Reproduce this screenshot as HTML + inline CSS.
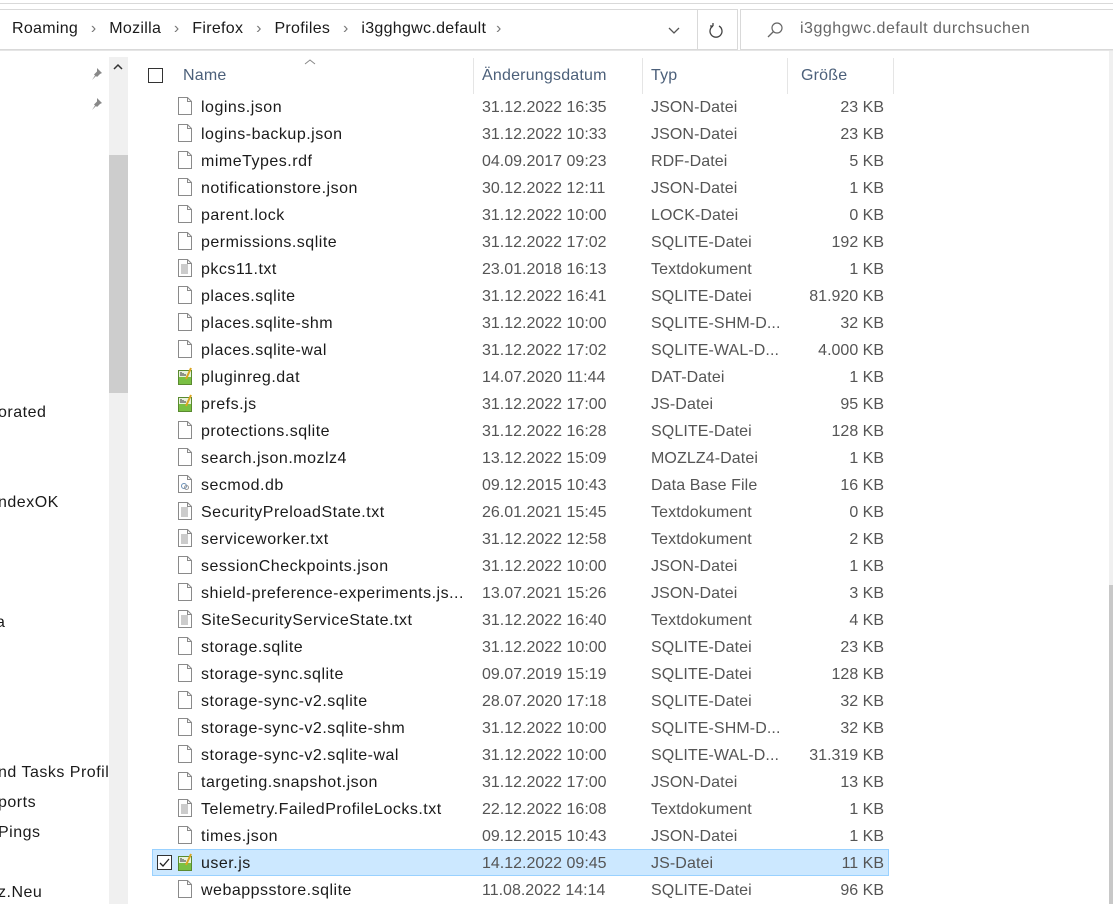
<!DOCTYPE html>
<html><head><meta charset="utf-8"><style>
*{margin:0;padding:0;box-sizing:border-box}
body{width:1113px;height:904px;overflow:hidden;background:#fff;font-family:"Segoe UI","Liberation Sans",sans-serif;font-size:16px;letter-spacing:0.5px;color:#1a1a1a;position:relative}
.a{position:absolute;white-space:nowrap}
.row{position:absolute;left:152px;width:737px;height:27px}
.row span{position:absolute;top:6px}
.n{left:49px}.d{left:330px;color:#555;letter-spacing:0}.t{left:499px;color:#555;letter-spacing:0.1px}.s{right:5px;color:#555;letter-spacing:0}
.ic{position:absolute;left:26px;top:4px;width:14px;height:18px}
.hd{position:absolute;top:67px;color:#4c607a;letter-spacing:0.2px}
.sep{position:absolute;top:58px;width:1px;height:36px;background:#e5e5e5}
</style></head><body>
<div class="a" style="left:0;top:3px;width:1113px;height:1px;background:#d9d9d9"></div>
<div class="a" style="left:0;top:9px;width:738px;height:41px;border:1px solid #d9d9d9;border-left:none"></div>
<div class="a" style="left:697px;top:10px;width:1px;height:39px;background:#d9d9d9"></div>
<div class="a" style="left:12px;top:20px;font-size:16px;letter-spacing:0.3px">Roaming <span style="color:#777;padding:0 8px">›</span> Mozilla <span style="color:#777;padding:0 8px">›</span> Firefox <span style="color:#777;padding:0 8px">›</span> Profiles <span style="color:#777;padding:0 8px">›</span> i3gghgwc.default <span style="color:#777;padding:0 5px">›</span></div>
<svg class="a" style="left:667px;top:25px" width="14" height="10"><path d="M2 3l5 5 5-5" fill="none" stroke="#555" stroke-width="1.3"/></svg>
<svg class="a" style="left:708px;top:22px" width="16" height="18"><path d="M5 4A6 6 0 1 0 11 4M5 4V1M5 4H2" fill="none" stroke="#444" stroke-width="1.3"/></svg>
<div class="a" style="left:740px;top:9px;width:380px;height:41px;border:1px solid #d9d9d9"></div>
<svg class="a" style="left:766px;top:21px" width="18" height="18"><circle cx="11" cy="7" r="5" fill="none" stroke="#666" stroke-width="1.2"/><path d="M7.5 10.5L2 16" stroke="#666" stroke-width="1.3"/></svg>
<div class="a" style="left:800px;top:20px;font-size:16px;color:#666">i3gghgwc.default durchsuchen</div>
<div class="a" style="left:0;top:50px;width:1113px;height:1px;background:#e5e5e5"></div>
<svg class="a" style="left:90px;top:66px" width="14" height="14"><path d="M7 2l5 5-2 1-3 3-1 -1-4 4 3-4.5-1-1 3-3z" fill="#888"/></svg>
<svg class="a" style="left:90px;top:96px" width="14" height="14"><path d="M7 2l5 5-2 1-3 3-1 -1-4 4 3-4.5-1-1 3-3z" fill="#888"/></svg>
<div class="a" style="left:109px;top:57px;width:19px;height:847px;background:#f0f0f0"></div>
<div class="a" style="left:109px;top:155px;width:19px;height:238px;background:#cdcdcd"></div>
<svg class="a" style="left:112px;top:62px" width="12" height="10"><path d="M2 7l4-4 4 4" fill="none" stroke="#333" stroke-width="1.5"/></svg>
<div class="a" style="left:1109px;top:51px;width:4px;height:853px;background:#f0f0f0"></div>
<div class="a" style="left:1109px;top:585px;width:4px;height:319px;background:#c8c8c8"></div>
<div class="a" style="left:-2px;top:404px">orated</div>
<div class="a" style="left:-2px;top:494px">ndexOK</div>
<div class="a" style="left:-4px;top:614px">a</div>
<div class="a" style="left:-2px;top:764px">nd Tasks Profil</div>
<div class="a" style="left:-2px;top:794px">ports</div>
<div class="a" style="left:-2px;top:824px">Pings</div>
<div class="a" style="left:-2px;top:884px">z.Neu</div>
<div class="a" style="left:148px;top:68px;width:15px;height:15px;border:1px solid #333"></div>
<svg class="a" style="left:304px;top:58px" width="12" height="8"><path d="M1 6l5-4 5 4" fill="none" stroke="#888" stroke-width="1"/></svg>
<div class="hd" style="left:183px">Name</div>
<div class="hd" style="left:482px">Änderungsdatum</div>
<div class="hd" style="left:651px">Typ</div>
<div class="hd" style="left:801px">Größe</div>
<div class="sep" style="left:473px"></div><div class="sep" style="left:642px"></div><div class="sep" style="left:787px"></div><div class="sep" style="left:893px"></div>
<div class="row" style="top:849px;background:#cce8ff;border:1px solid #99d1ff"></div>
<div class="a" style="left:157px;top:855px;width:15px;height:15px;border:1px solid #333;background:#fff"></div>
<svg class="a" style="left:158px;top:856px" width="13" height="13"><path d="M2 7l3 3 6-7" fill="none" stroke="#222" stroke-width="1.3"/></svg>
<div id="rows"></div>
<script>
var D=[["logins.json","31.12.2022 16:35","JSON-Datei","23 KB"],["logins-backup.json","31.12.2022 10:33","JSON-Datei","23 KB"],["mimeTypes.rdf","04.09.2017 09:23","RDF-Datei","5 KB"],["notificationstore.json","30.12.2022 12:11","JSON-Datei","1 KB"],["parent.lock","31.12.2022 10:00","LOCK-Datei","0 KB"],["permissions.sqlite","31.12.2022 17:02","SQLITE-Datei","192 KB"],["pkcs11.txt","23.01.2018 16:13","Textdokument","1 KB",1],["places.sqlite","31.12.2022 16:41","SQLITE-Datei","81.920 KB"],["places.sqlite-shm","31.12.2022 10:00","SQLITE-SHM-D...","32 KB"],["places.sqlite-wal","31.12.2022 17:02","SQLITE-WAL-D...","4.000 KB"],["pluginreg.dat","14.07.2020 11:44","DAT-Datei","1 KB",2],["prefs.js","31.12.2022 17:00","JS-Datei","95 KB",2],["protections.sqlite","31.12.2022 16:28","SQLITE-Datei","128 KB"],["search.json.mozlz4","13.12.2022 15:09","MOZLZ4-Datei","1 KB"],["secmod.db","09.12.2015 10:43","Data Base File","16 KB",3],["SecurityPreloadState.txt","26.01.2021 15:45","Textdokument","0 KB",1],["serviceworker.txt","31.12.2022 12:58","Textdokument","2 KB",1],["sessionCheckpoints.json","31.12.2022 10:00","JSON-Datei","1 KB"],["shield-preference-experiments.js...","13.07.2021 15:26","JSON-Datei","3 KB"],["SiteSecurityServiceState.txt","31.12.2022 16:40","Textdokument","4 KB",1],["storage.sqlite","31.12.2022 10:00","SQLITE-Datei","23 KB"],["storage-sync.sqlite","09.07.2019 15:19","SQLITE-Datei","128 KB"],["storage-sync-v2.sqlite","28.07.2020 17:18","SQLITE-Datei","32 KB"],["storage-sync-v2.sqlite-shm","31.12.2022 10:00","SQLITE-SHM-D...","32 KB"],["storage-sync-v2.sqlite-wal","31.12.2022 10:00","SQLITE-WAL-D...","31.319 KB"],["targeting.snapshot.json","31.12.2022 17:00","JSON-Datei","13 KB"],["Telemetry.FailedProfileLocks.txt","22.12.2022 16:08","Textdokument","1 KB",1],["times.json","09.12.2015 10:43","JSON-Datei","1 KB"],["user.js","14.12.2022 09:45","JS-Datei","11 KB",2],["webappsstore.sqlite","11.08.2022 14:14","SQLITE-Datei","96 KB"]];
var h="";
D.forEach(function(r,i){
var ic;
if(r[4]==2) ic='<svg class="ic" viewBox="0 0 14 18"><rect x="0.5" y="3.5" width="13" height="14" fill="#7ac043" stroke="#5a8a30"/><rect x="1" y="4" width="12" height="6" fill="#e8f3dc"/><path d="M3 9V5M5 9V6M7 9V7" stroke="#333"/><path d="M8 12L13 1" stroke="#d9a520" stroke-width="2"/></svg>';
else {var ex='';if(r[4]==1)ex='<path d="M3 6h7M3 8h7M3 10h7M3 12h7M3 14h7" stroke="#777" stroke-width=".8"/>';if(r[4]==3)ex='<circle cx="6" cy="11" r="2.5" fill="none" stroke="#6a8fb5"/><circle cx="8.5" cy="12.5" r="2" fill="none" stroke="#999"/>';
ic='<svg class="ic" viewBox="0 0 14 18"><path d="M0.5 0.5H9.5L13.5 4.5V17.5H0.5Z" fill="#fff" stroke="#8a8a8a"/><path d="M9.5 0.5V4.5H13.5" fill="none" stroke="#8a8a8a"/>'+ex+'</svg>';}
h+='<div class="row" style="top:'+(93+27*i)+'px">'+ic+'<span class="n">'+r[0]+'</span><span class="d">'+r[1]+'</span><span class="t">'+r[2]+'</span><span class="s">'+r[3]+'</span></div>';
});
document.getElementById("rows").innerHTML=h;
</script>
</body></html>
